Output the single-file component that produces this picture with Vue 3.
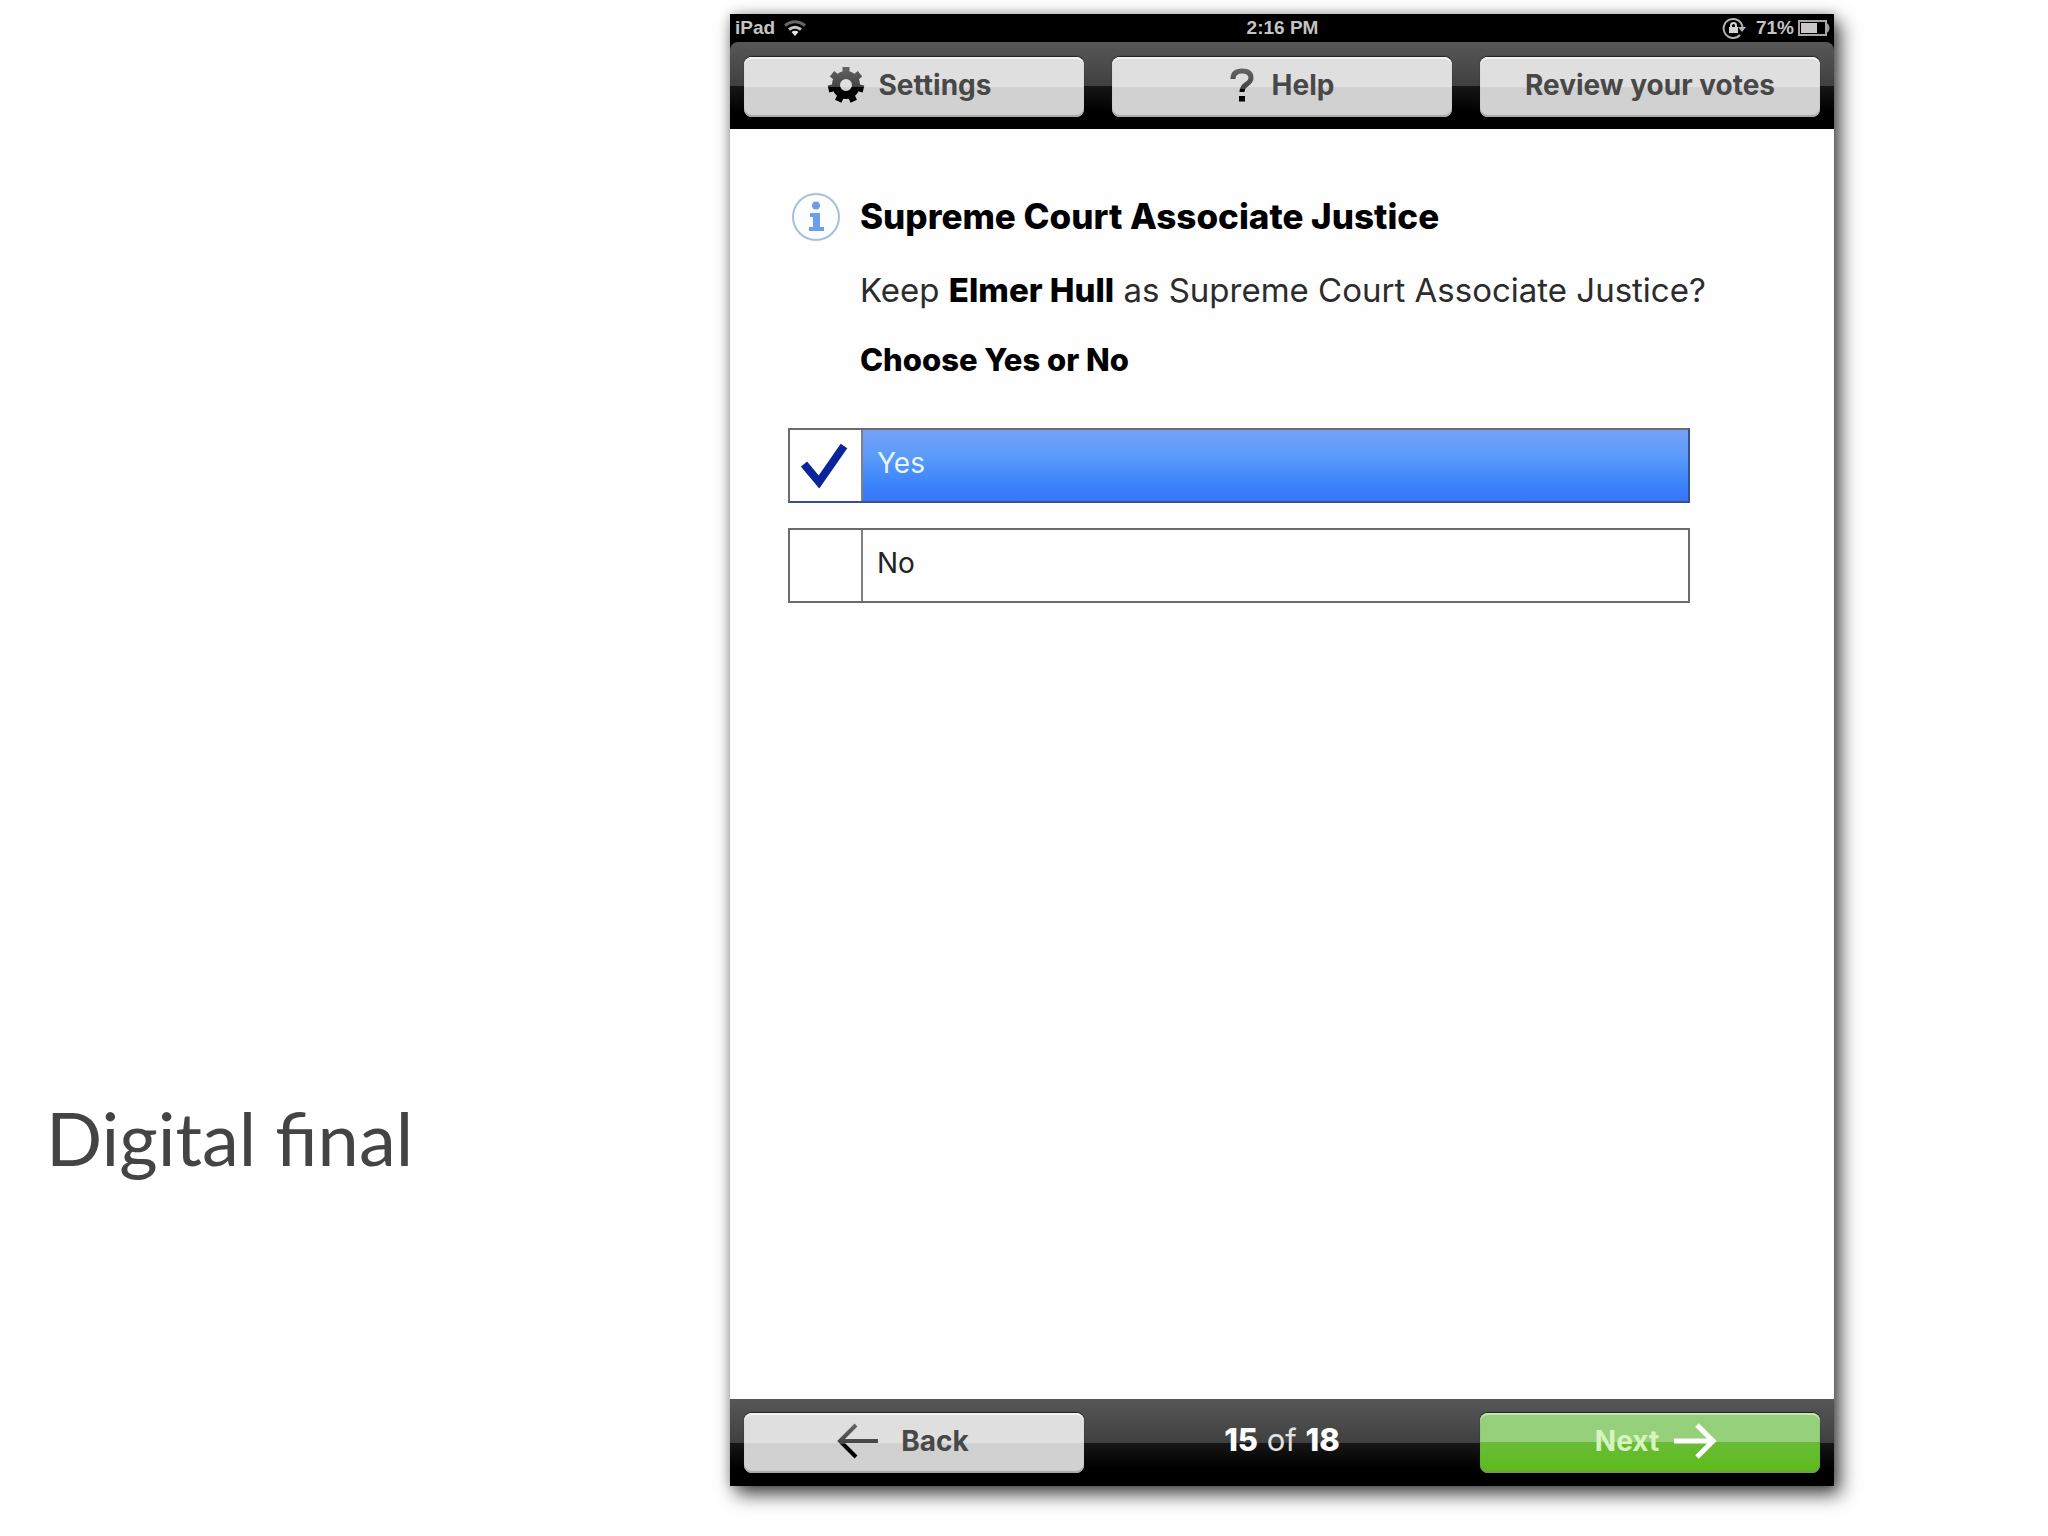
<script setup>
import { ref } from 'vue'

const choices = ['Yes', 'No']
const selected = ref('Yes')
const page = 15
const total = 18
</script>

<template>
  <main class="slide">
    <p class="caption">Digital final</p>

    <section class="tablet">
      <div class="top">
        <div class="status">
          <div class="status-left">
            <span>iPad</span>
            <svg width="22" height="16" viewBox="0 0 22 16" aria-hidden="true">
              <g fill="none" stroke-width="3">
                <path d="M1 5.500Q11-2 21 5.500" stroke="#666" />
                <path d="M5 9.500Q11 5 17 9.500" stroke="#c4c4c4" />
              </g>
              <path d="M7.500 12Q11 9.500 14.500 12L11 16Z" fill="#e6e6e6" />
            </svg>
          </div>
          <span>2:16 PM</span>
          <div class="status-right">
            <svg width="24" height="22" viewBox="0 0 24 22" aria-hidden="true">
              <path d="M18 18A9.500 9.500 0 1 1 20.500 10" fill="none" stroke="#b4b4b4" stroke-width="2" />
              <path d="M16 10H24L20 15Z" fill="#b4b4b4" />
              <rect x="7" y="10" width="9" height="6" fill="#d4d4d4" />
              <path d="M9 10V8.500a2.500 2.500 0 0 1 5 0V10" fill="none" stroke="#d4d4d4" stroke-width="2" />
            </svg>
            <span class="percent">71%</span>
            <svg width="32" height="16" viewBox="0 0 32 16" aria-hidden="true">
              <rect x="1" y="1" width="27" height="14" fill="none" stroke="#a8a8a8" stroke-width="2" />
              <rect x="3" y="3" width="16" height="10" fill="#c8c8c8" />
              <path d="M29 4Q32 8 29 12" fill="#777" stroke="#a0a0a0" stroke-width="2" />
            </svg>
          </div>
        </div>

        <nav class="bar bar-top">
          <button class="btn btn-settings" type="button">
            <svg width="38" height="38" viewBox="0 0 38 38" aria-hidden="true">
              <defs>
                <linearGradient id="gloss" x1="0" y1="0" x2="0" y2="38" gradientUnits="userSpaceOnUse">
                  <stop offset="0" stop-color="#666" />
                  <stop offset=".54" stop-color="#444" />
                  <stop offset=".56" stop-color="#000" />
                  <stop offset="1" stop-color="#000" />
                </linearGradient>
              </defs>
              <g fill="none" stroke="url(#gloss)">
                <circle cx="19" cy="19" r="10" stroke-width="8" />
                <path
                  d="M19 9L19.010 1M26.800 12.800L33 7.800M28.700 21.200L36.500 23M23.300 28L26.800 35.200M14.700 28L11.200 35.200M9.300 21.200L1.500 23M11.200 12.800L5 7.800"
                  stroke-width="7"
                />
              </g>
            </svg>
            <span>Settings</span>
          </button>
          <button class="btn btn-help" type="button">
            <svg width="24" height="34" viewBox="0 0 24 34" aria-hidden="true">
              <g fill="none" stroke="url(#gloss)" stroke-width="5">
                <path d="M3 11Q3 3 12 3T21 10Q21 13 17 16Q12 19 12 24" />
                <path d="M12 28L12.010 33.500" stroke-width="6" />
              </g>
            </svg>
            <span>Help</span>
          </button>
          <button class="btn" type="button">Review your votes</button>
        </nav>
      </div>

      <div class="contest">
        <header class="question">
          <button class="info" type="button" aria-label="Information">
            <svg width="48" height="48" viewBox="0 0 48 48" aria-hidden="true">
              <circle cx="24" cy="24" r="23" fill="#fcfdff" stroke="#a9bfd9" stroke-width="2" />
              <circle cx="24" cy="12.500" r="4" fill="#6e9ce6" />
              <path d="M18 20H28V34H32V38H17V34H21V24H18Z" fill="#6b9eee" />
            </svg>
          </button>
          <div class="text">
            <h1>Supreme Court Associate Justice</h1>
            <p class="prompt">Keep <strong>Elmer Hull</strong> as Supreme Court Associate Justice?</p>
            <h2 id="instruction">Choose Yes or No</h2>
          </div>
        </header>

        <div class="choices" role="radiogroup" aria-labelledby="instruction">
          <label
            v-for="choice in choices"
            :key="choice"
            class="choice"
            :class="{ selected: selected === choice }"
          >
            <span class="box">
              <input v-model="selected" type="radio" name="vote" :value="choice" />
              <svg v-if="selected === choice" width="50" height="50" viewBox="0 0 50 50" aria-hidden="true">
                <path d="M3 23L18 41L43 5" fill="none" stroke="#0a249c" stroke-width="8" />
              </svg>
            </span>
            <span class="name">{{ choice }}</span>
          </label>
        </div>
      </div>

      <nav class="bar bar-bottom">
        <button class="btn btn-back" type="button">
          <svg width="42" height="36" viewBox="0 0 42 36" aria-hidden="true">
            <path d="M41 18L3 18.010M19 2L3 18L19 34" fill="none" stroke="url(#gloss)" stroke-width="4" />
          </svg>
          <span>Back</span>
        </button>
        <p class="progress"><strong>{{ page }}</strong> of <strong>{{ total }}</strong></p>
        <button class="btn btn-next" type="button">
          <span>Next</span>
          <svg width="44" height="36" viewBox="0 0 44 36" aria-hidden="true">
            <path d="M1 18H39M24 2L40 18L24 34" fill="none" stroke="#fff" stroke-width="5" />
          </svg>
        </button>
      </nav>
    </section>
  </main>
</template>

<style>
body {
  margin: 0;
  background: #fff;
}
</style>

<style scoped>
.slide {
  box-sizing: border-box;
  min-height: 100vh;
  padding: 14px 0 50px;
  display: grid;
  grid-template-columns: 730fr 1104fr 214fr;
  font-family: Inter, "Liberation Sans", sans-serif;
}

h1,
h2,
p {
  margin: 0;
}

button {
  font: inherit;
  border: 0;
  padding: 0;
  cursor: pointer;
}

svg {
  display: block;
  flex: none;
}

.caption {
  align-self: end;
  padding: 0 0 304px 46px;
  font-family: Lato, sans-serif;
  font-size: 74px;
  line-height: 88px;
  color: #444;
}

.tablet {
  display: flex;
  flex-direction: column;
  background: #fefefe;
  box-shadow: 6px 8px 18px rgba(0, 0, 0, 0.75), 0 0 10px rgba(0, 0, 0, 0.2);
}

.top {
  background: #000;
}

.status {
  height: 28px;
  padding: 0 4px 0 5px;
  display: grid;
  grid-template-columns: 1fr auto 1fr;
  align-items: center;
  color: #c4c4c4;
  font-family: "Liberation Sans", sans-serif;
  font-weight: bold;
  font-size: 19px;
}

.status-left,
.status-right {
  display: flex;
  align-items: center;
}

.status-left {
  gap: 9px;
}

.status-right {
  justify-content: flex-end;
}

.percent {
  margin: 0 4px 0 10px;
}

.bar {
  box-sizing: border-box;
  height: 87px;
  padding: 14px;
  display: grid;
  grid-template-columns: repeat(3, 1fr);
  column-gap: 28px;
  background: linear-gradient(#575757, #404040 50%, #161616 51%, #000 80%);
}

.bar-top {
  padding-top: 15px;
  border-radius: 8px 8px 0 0;
}

.btn {
  height: 60px;
  display: flex;
  align-items: center;
  justify-content: center;
  gap: 14px;
  padding-bottom: 4px;
  border-radius: 8px;
  background: linear-gradient(#dedede, #e0e0e0 50%, #d0d0d0 51%, #d2d2d2);
  box-shadow: inset 0 2px 0 #f2f2f2, inset 0 -2px 1px #a8a8a8, 0 -1px 1px #222;
  color: #484848;
  font-weight: 700;
  font-size: 28px;
}

.btn-settings {
  padding-right: 10px;
}

.btn-help {
  gap: 18px;
}

.btn-back {
  gap: 22px;
  padding-right: 22px;
}

.btn-next {
  padding-left: 12px;
  background: linear-gradient(#96cf7a, #97d07a 48%, #6abc38 49%, #5bbb18);
  box-shadow: inset 0 2px 0 #c4e6b0, inset 0 -2px 1px #6f9d58, 0 -1px 1px #222;
  color: #d4f5be;
}

.progress {
  align-self: center;
  padding-bottom: 8px;
  text-align: center;
  font-size: 31px;
  color: #e2e2e2;
}

.progress strong {
  font-weight: 800;
  color: #fff;
}

.contest {
  flex: 1;
  padding: 64px 0 46px 58px;
}

.question {
  display: flex;
  align-items: flex-start;
  gap: 20px;
  padding-left: 4px;
}

.info {
  border-radius: 50%;
  background: none;
}

.text {
  padding-top: 1px;
  line-height: 44px;
  color: #000;
}

h1 {
  font-size: 35px;
  font-weight: 800;
}

.prompt {
  margin: 30px 0 26px;
  font-size: 33px;
  color: #2c2c2c;
}

.prompt strong {
  font-weight: 800;
  color: #000;
}

h2 {
  font-size: 31px;
  font-weight: 800;
}

.choices {
  margin: 46px 144px 0 0;
  display: grid;
  row-gap: 25px;
}

.choice {
  box-sizing: border-box;
  height: 75px;
  display: flex;
  border: 2px solid #6c6c6c;
  cursor: pointer;
}

.box {
  flex: none;
  width: 71px;
  display: grid;
  place-items: center;
  border-right: 2px solid #808080;
  background: #fff;
}

.box input,
.box svg {
  grid-area: 1 / 1;
}

.box input {
  appearance: none;
  width: 100%;
  height: 100%;
  margin: 0;
}

.box svg {
  pointer-events: none;
}

.name {
  flex: 1;
  display: flex;
  align-items: center;
  padding: 0 14px 5px;
  font-size: 28px;
  color: #222;
}

.selected {
  border-color: #6c6c6c #38508c #38508c #6c6c6c;
}

.selected .name {
  background: linear-gradient(#76a0f8, #5c9cfa 35%, #3c84fa 75%, #3874fa);
  color: #e8f4ff;
}
</style>
